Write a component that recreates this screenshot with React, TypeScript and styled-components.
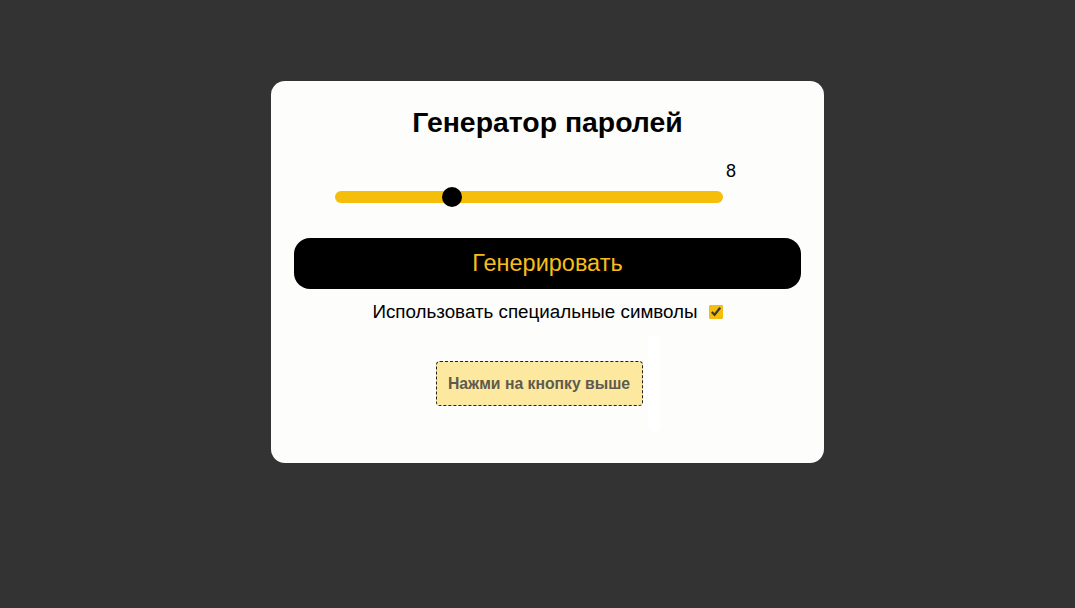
import React, { useState } from "react";
import styled, { createGlobalStyle } from "styled-components";

const GlobalStyle = createGlobalStyle`
  html, body {
    margin: 0;
    padding: 0;
    background: #323332;
    font-family: "Liberation Sans", Arial, sans-serif;
  }
`;

const Page = styled.div`
  min-height: 608px;
  display: flex;
  justify-content: center;
  align-items: flex-start;
  padding: 81px 0 0 20px;
  box-sizing: border-box;
`;

const Card = styled.div`
  width: 553px;
  box-sizing: border-box;
  background: #fdfdfb;
  border-radius: 14px;
  padding: 25px 23px 31px;
  display: flex;
  flex-flow: column nowrap;
  align-items: stretch;
`;

const Title = styled.h1`
  margin: 0;
  font-size: 28.4px;
  line-height: 32px;
  font-weight: 700;
  text-align: center;
  color: #000;
`;

const SliderRow = styled.div`
  margin-top: 23px;
  display: flex;
  justify-content: center;
  align-items: flex-start;
  padding-right: 24px;
`;

const Range = styled.input`
  -webkit-appearance: none;
  appearance: none;
  width: 388px;
  height: 12px;
  margin: 30px 0 0;
  border-radius: 6px;
  background: #f5be0b;
  outline: none;

  &::-webkit-slider-thumb {
    -webkit-appearance: none;
    appearance: none;
    width: 20px;
    height: 20px;
    border-radius: 50%;
    background: #000;
    cursor: pointer;
  }
  &::-moz-range-thumb {
    width: 20px;
    height: 20px;
    border: none;
    border-radius: 50%;
    background: #000;
  }
`;

const Value = styled.span`
  margin-left: 3px;
  font-size: 18px;
  line-height: 21px;
  color: #000;
`;

const GenerateButton = styled.button`
  margin-top: 35px;
  height: 51px;
  border: none;
  border-radius: 16px;
  background: #000;
  color: #f5be1a;
  font-family: "Liberation Sans", Arial, sans-serif;
  font-size: 23.5px;
  cursor: pointer;
`;

const OptionRow = styled.label`
  margin-top: 12px;
  display: flex;
  justify-content: center;
  align-items: center;
  font-size: 18.8px;
  line-height: 21px;
  color: #000;
`;

const Check = styled.input`
  width: 14px;
  height: 14px;
  margin: 0 0 0 11px;
  accent-color: #f5be0b;
`;

const OutputRow = styled.div`
  margin-top: 13px;
  display: flex;
  justify-content: center;
  align-items: center;
  gap: 5px;
`;

const Output = styled.div`
  width: 207px;
  height: 45px;
  box-sizing: border-box;
  display: flex;
  align-items: center;
  justify-content: center;
  background: #fde8a0;
  border: 1px dashed #222;
  border-radius: 4px;
  font-size: 15.75px;
  font-weight: 700;
  color: #5f5b4c;
`;

const Strip = styled.div`
  width: 12px;
  height: 97px;
  background: #ffffff;
  border-radius: 6px;
`;

export default function App() {
  const [length, setLength] = useState(8);
  const [special, setSpecial] = useState(true);

  return (
    <>
      <GlobalStyle />
      <Page>
        <Card>
          <Title>Генератор паролей</Title>
          <SliderRow>
            <Range
              type="range"
              min={1}
              max={25}
              value={length}
              onChange={(e) => setLength(parseInt(e.target.value))}
            />
            <Value>{length}</Value>
          </SliderRow>
          <GenerateButton>Генерировать</GenerateButton>
          <OptionRow>
            Использовать специальные символы
            <Check
              type="checkbox"
              checked={special}
              onChange={(e) => setSpecial(e.target.checked)}
            />
          </OptionRow>
          <OutputRow>
            <Output>Нажми на кнопку выше</Output>
            <Strip />
          </OutputRow>
        </Card>
      </Page>
    </>
  );
}
